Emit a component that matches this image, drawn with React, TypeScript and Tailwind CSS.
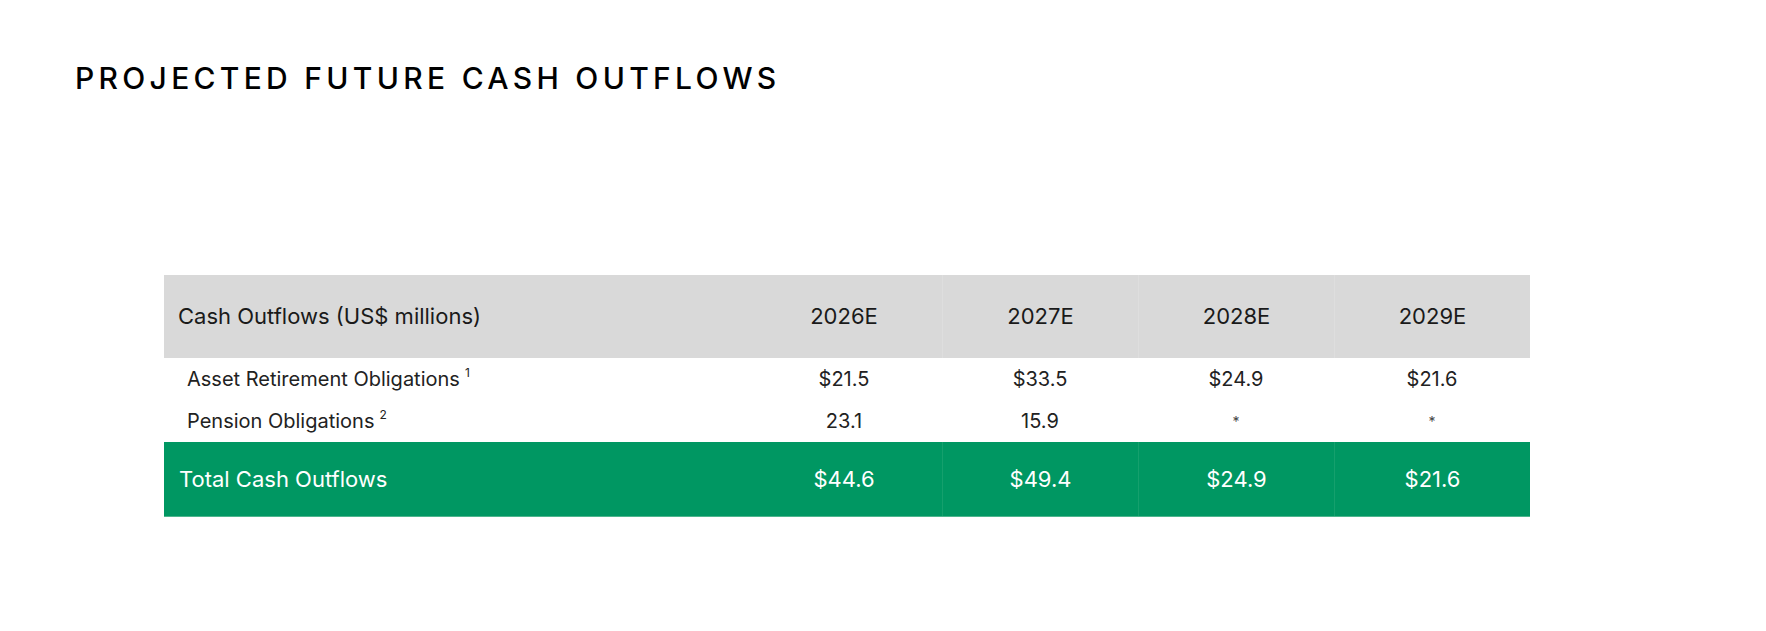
const years = ['2026E', '2027E', '2028E', '2029E']

const rows = [
  { label: 'Asset Retirement Obligations', note: '1', values: ['$21.5', '$33.5', '$24.9', '$21.6'] },
  { label: 'Pension Obligations', note: '2', values: ['23.1', '15.9', '*', '*'] },
]

const totals = ['$44.6', '$49.4', '$24.9', '$21.6']

const grid = 'grid grid-cols-[582px_196px_196px_196px_196px]'

export default function App() {
  return (
    <div className="min-h-screen bg-white text-[#1a1a1a] [font-family:Inter,'Noto_Sans',sans-serif]">
      <h1 className="pl-[75px] pt-[58px] text-[30px] leading-[40px] font-medium tracking-[4.3px] text-black">
        PROJECTED FUTURE CASH OUTFLOWS
      </h1>

      <div className="ml-[164px] mt-[177px] w-[1366px]">
        <div className={`${grid} h-[83px] bg-[#d9d9d9] text-[22px]`}>
          <div className="flex items-center pl-[14px]">Cash Outflows (US$ millions)</div>
          {years.map((y, i) => (
            <div
              key={y}
              className={`flex items-center justify-center ${i > 0 ? 'border-l border-[#dedede]' : ''}`}
            >
              {y}
            </div>
          ))}
        </div>

        {rows.map((r) => (
          <div key={r.label} className={`${grid} h-[42px] text-[20px] text-[#222]`}>
            <div className="flex items-center pl-[23px]">
              {r.label}
              <sup className="ml-[5px] text-[12px]">{r.note}</sup>
            </div>
            {r.values.map((v, i) => (
              <div key={i} className="flex items-center justify-center">
                {v === '*' ? <span className="text-[14px] text-[#444]">*</span> : v}
              </div>
            ))}
          </div>
        ))}

        <div className={`${grid} h-[75px] bg-[#009762] text-[22px] text-white border-b border-[#4db58d]`}>
          <div className="flex items-center pl-[15px]">Total Cash Outflows</div>
          {totals.map((t, i) => (
            <div
              key={i}
              className={`flex items-center justify-center ${i > 0 ? 'border-l border-[#15a06d]' : ''}`}
            >
              {t}
            </div>
          ))}
        </div>
      </div>
    </div>
  )
}
